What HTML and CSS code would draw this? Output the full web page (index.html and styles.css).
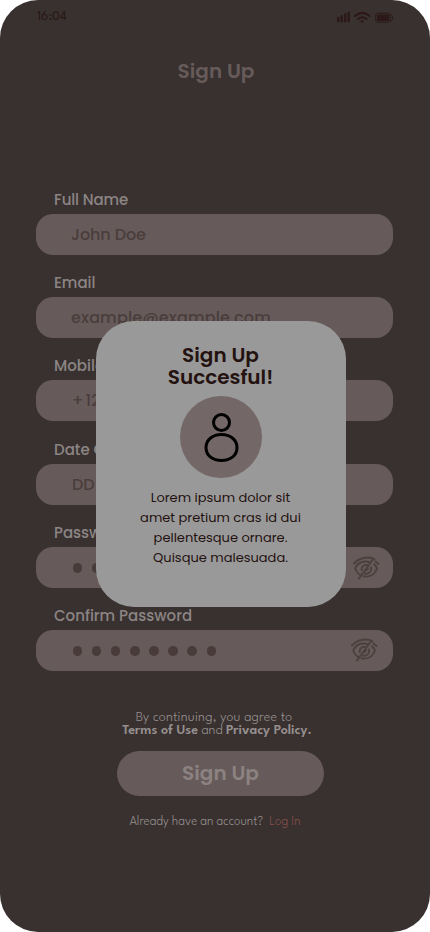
FILE: index.html
```html
<!DOCTYPE html>
<html lang="en">
<head>
<meta charset="utf-8">
<meta name="viewport" content="width=device-width, initial-scale=1">
<title>Sign Up</title>
<link rel="stylesheet" href="styles.css">
</head>
<body>
<svg class="defs" aria-hidden="true">
  <symbol id="eye-off" viewBox="0 0 28 24">
    <path d="M2 7.500C8 .8 18 .2 22.500 3.500M23.500 5.500L26.500 8M18.500 6.600C12 3.800 5.500 6.500 3.200 12.500C5 17 7 18.500 9 19.300M22 8.200C23.500 9.500 24.500 11 25 12.500C22.500 19 17 21.500 11.500 20.300M16 9.200C12 7.800 9 11 9.800 14.200M19 11.500C20 15.500 16.500 18.500 13 17.500M21.500 2.500L7 22.500M14.300 14.200L16 12.500"/>
  </symbol>
</svg>
<main class="phone">
  <header class="status">
    <span class="time">16:04</span>
    <svg class="status-icons" viewBox="0 0 58 14">
      <path class="solid" d="M1 8a1.100 1.100 0 0 1 2.400 0V12.300H1zM4.500 6.200a1.100 1.100 0 0 1 2.400 0V12.300H4.500zM8 4.200a1.100 1.100 0 0 1 2.400 0V12.300H8zM11.500 2.700a1.100 1.100 0 0 1 2.400 0V12.300h-2.400z"/>
      <path class="line" d="M19 6q7.200-6.200 14.500 0M22 9q4.200-3.600 8.500 0"/>
      <circle class="solid" cx="26.200" cy="11.300" r="1.400"/>
      <rect class="outline" x="39.700" y="3.200" width="14.600" height="9" rx="2"/>
      <rect class="solid" x="41" y="4.500" width="12" height="6.400" rx=".5"/>
      <path class="outline" d="M54.500 4q4.500 3.700 0 7.400"/>
    </svg>
  </header>
  <h1 class="title">Sign Up</h1>
  <form class="form">
    <div class="group"><label class="name">Full Name</label><div class="field"><span>John Doe</span></div></div>
    <div class="group"><label>Email</label><div class="field"><span class="email">example@example.com</span></div></div>
    <div class="group"><label>Mobile</label><div class="field phone-value"><span class="number">+ 12</span></div></div>
    <div class="group"><label>Date O</label><div class="field phone-value"><span>DD</span></div></div>
    <div class="group"><label>Passw</label><div class="field"><div class="dots"><i></i><i></i><i></i><i></i><i></i><i></i><i></i><i></i></div><svg class="eye"><use href="#eye-off"/></svg></div></div>
    <div class="group"><label>Confirm Password</label><div class="field last"><div class="dots"><i></i><i></i><i></i><i></i><i></i><i></i><i></i><i></i></div><svg class="eye"><use href="#eye-off"/></svg></div></div>
  </form>
  <p class="terms"><span class="lead">By continuing, you agree to</span><br><b>Terms of Use</b> and <b>Privacy Policy.</b></p>
  <div class="submit">Sign Up</div>
  <p class="login"><span>Already have an account?</span><a>Log In</a></p>
  <section class="modal">
    <h2>Sign Up<br>Succesful!</h2>
    <div class="avatar">
      <svg viewBox="0 0 82 82"><circle cx="41.500" cy="26.500" r="8"/><path d="M41.500 38.500C50 38.500 57 43.500 57 51.500C57 60 50 64.500 41.500 64.500S26 60 26 51.500C26 43.500 33 38.500 41.500 38.500Z"/></svg>
    </div>
    <p>Lorem ipsum dolor sit<br>amet pretium cras id dui<br>pellentesque ornare.<br>Quisque malesuada.</p>
  </section>
</main>
</body>
</html>
```
FILE: styles.css
```css
* { box-sizing: border-box; }
body { margin: 0; background: #fff; font-family: Poppins, Inter, sans-serif; }
h1, h2, p { margin: 0; }
.defs { position: absolute; width: 0; height: 0; }
.phone { position: relative; width: 430px; height: 932px; overflow: hidden; border-radius: 38px; background: #383130; }
.status { display: flex; justify-content: space-between; height: 32px; padding: 10px 36px 0 37px; color: #291715; }
.time { padding-top: 1px; font: 400 13.500px/13px "League Spartan", Lato, sans-serif; }
.status-icons { width: 58px; height: 14px; }
.solid { fill: #2c1917; }
.line { fill: none; stroke: #2c1917; stroke-width: 2; stroke-linecap: round; }
.outline { fill: none; stroke: #2c1917; stroke-width: 1; }
.title { height: 157px; padding-top: 24px; padding-left: 2px; text-align: center; font-size: 20px; line-height: 30px; font-weight: 600; color: #665b5a; }
.form { padding: 0 37px 0 36px; }
.group { height: 83.2px; }
label { display: block; height: 25px; padding-left: 18px; font-size: 15px; line-height: 22px; font-weight: 500; color: #8c8584; white-space: nowrap; }
.name { letter-spacing: -.1px; }
.field { display: flex; align-items: center; justify-content: space-between; height: 41px; padding: 0 13px 0 35px; border-radius: 17px; background: #665b5a; color: #4a3d3c; font-size: 16px; font-weight: 500; letter-spacing: -.1px; }
.email { letter-spacing: .14px; }
.number { word-spacing: -2px; }
.phone-value { padding-left: 36px; }
.last { padding-right: 15px; }
.eye { margin-top: 2px; }
.last .eye { margin-top: 0; }
.dots { display: flex; gap: 9.550px; padding: 1px 0 0 1.600px; }
.dots i { width: 9.600px; height: 9.600px; border-radius: 50%; background: #483b3a; }
.eye { width: 28px; height: 24px; fill: none; stroke: #4c3f3e; stroke-width: 1.900; stroke-linecap: round; }
.terms { margin-top: 22.800px; height: 28px; padding-left: 4px; text-align: center; font: 300 14px/13px "League Spartan", Lato, sans-serif; color: #968f8e; }
.terms b { font-weight: 600; }
.lead { margin-right: 6px; letter-spacing: .17px; }
.submit { display: flex; align-items: center; justify-content: center; width: 207px; height: 45px; margin: 12px 0 0 117px; border-radius: 23px; background: #665b5a; color: #8c8281; font-size: 20px; font-weight: 600; }
.login { display: flex; justify-content: center; gap: 6px; margin-top: 19px; font: 300 13px/15px "League Spartan", Lato, sans-serif; color: #968f8e; }
.login a { color: #874e49; }
.modal { position: absolute; left: 96px; top: 321px; width: 250px; height: 286px; padding-top: 23px; border-radius: 38px; background: #999; color: #241210; text-align: center; }
h2 { height: 52px; padding-right: 1px; font-size: 20px; line-height: 22px; font-weight: 600; }
.avatar { width: 82px; height: 82px; margin: 0 0 10px 84px; border-radius: 50%; background: #736867; }
.avatar svg { display: block; fill: none; stroke: #000; stroke-width: 3; }
.modal p { font-size: 13px; line-height: 20px; padding-right: 1px; }
```
